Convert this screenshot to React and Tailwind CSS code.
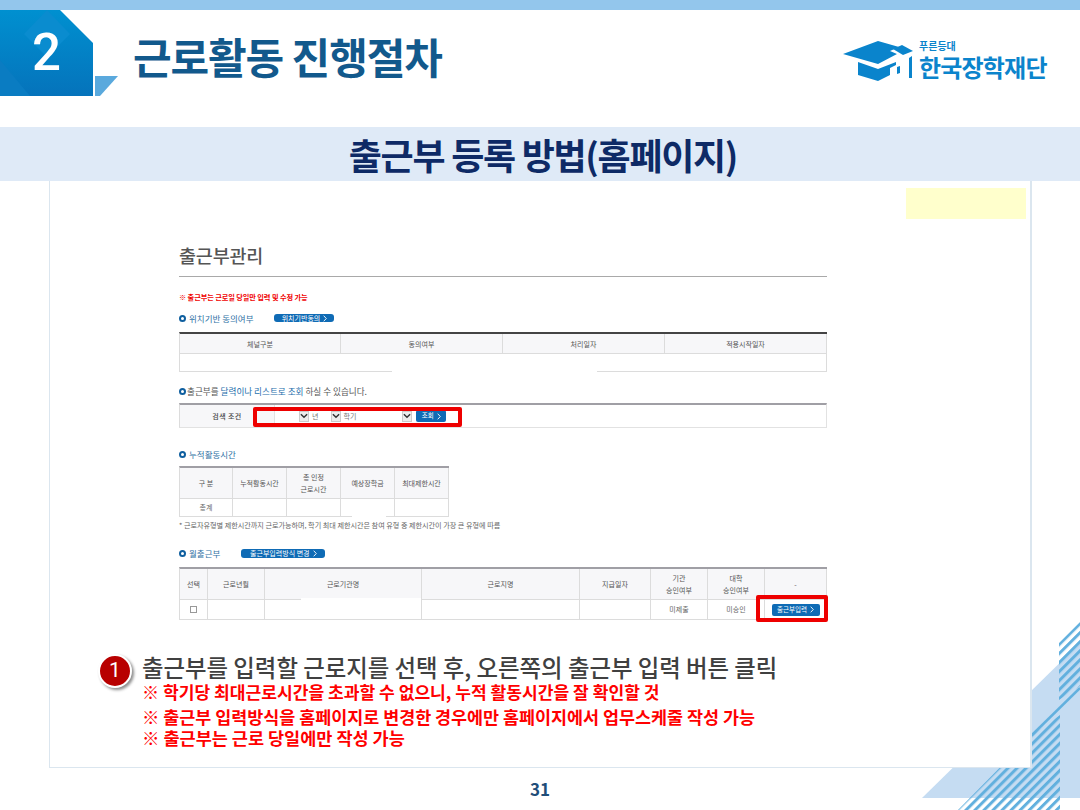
import React from "react";

const Chev = () => (
  <svg width="9" height="6" viewBox="0 0 9 6"><path d="M1 1l3.5 3.5L8 1" fill="none" stroke="#333" strokeWidth="1.6" /></svg>
);
const Arrow = () => (
  <svg width="4" height="7" viewBox="0 0 4 7" className="ml-[3px]"><path d="M.7.7L3.3 3.5.7 6.3" fill="none" stroke="#fff" strokeWidth="0.9" /></svg>
);
const Bullet = () => <span className="inline-block w-[7px] h-[7px] rounded-full border-2 border-[#0f5f9f] mr-[3px] shrink-0" />;

const Select = ({ w }) => (
  <span className={`${w} h-[12px] flex items-center justify-end bg-white`}>
    <span className="w-[10px] h-[11px] bg-[#ededed] border border-[#ccc] flex items-center justify-center"><Chev /></span>
  </span>
);

const Th = ({ children, className = "" }) => (
  <div className={`flex items-center justify-center text-center bg-[#f7f7f9] border-r border-b border-[#dcdcdc] text-[7px] leading-[12px] text-[#555] ${className}`}>{children}</div>
);
const Td = ({ children, className = "" }) => (
  <div className={`flex items-center justify-center text-center border-r border-b border-[#dcdcdc] text-[7px] text-[#666] ${className}`}>{children}</div>
);

function Decor() {
  return (
    <svg className="absolute inset-0" width="1080" height="810" viewBox="0 0 1080 810">
      <defs>
        <pattern id="hatch" width="6.4" height="6.4" patternUnits="userSpaceOnUse" patternTransform="rotate(-45)">
          <rect width="6.4" height="3" fill="#62b0de" />
        </pattern>
        <clipPath id="up"><polygon points="1059,643 1080,622 1080,686 1059,700" /></clipPath>
        <clipPath id="low"><polygon points="1060,715 1060,810 958,810 1032,735" /></clipPath>
      </defs>
      <polygon points="1080,643 922,798 1080,798" fill="#c5dcf2" />
      <rect x="0" y="0" width="1080" height="810" fill="url(#hatch)" clipPath="url(#up)" />
      <rect x="0" y="0" width="1080" height="810" fill="url(#hatch)" clipPath="url(#low)" />
      <line x1="1032" y1="735" x2="1080" y2="688" stroke="#62b0de" strokeWidth="2.5" />
    </svg>
  );
}

function Tab() {
  return (
    <div className="relative w-[120px] h-[86px] shrink-0">
      <svg width="120" height="86" viewBox="0 0 120 86" className="block">
        <defs>
          <linearGradient id="tabg" x1="0" y1="0" x2="0" y2="1">
            <stop offset="0" stopColor="#0090d0" />
            <stop offset="1" stopColor="#0573bb" />
          </linearGradient>
        </defs>
        <polygon points="0,0 60,0 93,33 93,86 0,86" fill="url(#tabg)" />
        <polygon points="47,0 70,24 47,47 24,24" fill="#0a8ccf" />
        <polygon points="0,50 30,86 0,86" fill="#0a7cc2" />
        <polygon points="95,66 118,66 100,86 95,86" fill="#5aa9dd" />
      </svg>
      <span className="absolute left-[32px] top-[15px] text-[51px] leading-[56px] font-medium text-white font-['Roboto',sans-serif]">2</span>
    </div>
  );
}

function Logo() {
  return (
    <div className="flex items-start w-[204px] h-[40px] shrink-0">
      <svg width="72" height="40" viewBox="0 0 72 40" className="shrink-0">
        <polygon points="0,13 35,0 56,6 47,10 54,13 35,23" fill="#0a84cc" />
        <polygon points="50,8 59,4 70,10 60,14" fill="#0a84cc" />
        <polygon points="15,21 35,28 53,21 53,24 47,27 47,34 35,40 15,34" fill="#0a84cc" />
        <polygon points="54,26 57,25 57,32 54,33" fill="#0a84cc" />
        <polygon points="66,17 69,15 69,37 66,37" fill="#0a84cc" />
      </svg>
      <div className="ml-[4px] flex flex-col text-[#0b84cc] font-bold">
        <span className="text-[10px] leading-[10px]">푸른등대</span>
        <span className="text-[24px] leading-[26px] tracking-[-0.8px] mt-[3px] whitespace-nowrap">한국장학재단</span>
      </div>
    </div>
  );
}

export default function App() {
  return (
    <div className="relative w-[1080px] h-[810px] overflow-hidden bg-white font-['Noto_Sans_CJK_KR','Noto_Sans',sans-serif]">
      <Decor />
      <div className="relative flex flex-col h-full">
        <div className="h-[10px] bg-[#93c6ec]" />
        <div className="flex items-center h-[86px]">
          <Tab />
          <h1 className="ml-[13px] text-[42px] leading-[50px] font-bold text-[#12598c] tracking-[-1.1px] mt-[5px] whitespace-nowrap">근로활동 진행절차</h1>
          <div className="flex-1" />
          <div className="mt-[16px] mr-[33px]"><Logo /></div>
        </div>
        <div className="h-[31px]" />
        <div className="h-[54px] bg-[#dfeaf7] flex items-center justify-center pl-[6px]">
          <h2 className="text-[36px] leading-[50px] font-bold text-[#0e2a66] tracking-[-1.3px]">출근부 등록 방법(홈페이지)</h2>
        </div>

        <div className="relative ml-[49px] w-[983px] h-[587px] bg-white border-l border-r-2 border-b border-[#dbe6ef]">
          <div className="absolute left-[856px] top-[7px] w-[120px] h-[31px] bg-[#ffffcc]" />
          <div className="ml-[129px] w-[648px] pt-[63px] relative">
            <div className="h-[22px] flex items-center text-[18.5px] leading-[22px] font-medium text-[#555] tracking-[-0.2px]">출근부관리</div>
            <div className="mt-[10px] h-px bg-[#a9a9a9]" />
            <div className="mt-[16px] h-[9px] flex items-center text-[7.2px] leading-[9px] font-bold text-[#f00000] tracking-[-0.1px]">※ 출근부는 근로일 당일만 입력 및 수정 가능</div>

            <div className="mt-[11px] h-[10px] flex items-center text-[8.5px] leading-[10px] text-[#2f72a5]">
              <Bullet />위치기반 동의여부
              <span className="ml-[21px] w-[60px] h-[8px] rounded-[3px] bg-[#0f6bb5] text-white text-[7px] leading-[8px] flex items-center justify-center">위치기반동의<Arrow /></span>
            </div>
            <div className="relative mt-[9px] grid grid-cols-[161px_162px_162px_162px] grid-rows-[20px_18px] border-t-2 border-[#444] border-l border-l-[#dcdcdc]">
              <Th>체널구분</Th><Th>동의여부</Th><Th>처리일자</Th><Th>적용시작일자</Th>
              <Td className="col-span-4" />
              <div className="absolute left-[212px] top-[36px] w-[205px] h-[3px] bg-white" />
            </div>

            <div className="mt-[14px] h-[10px] flex items-center text-[8.6px] leading-[10px] text-[#555]">
              <Bullet /><span className="ml-[-2px]">출근부를 <span className="text-[#1a6cab]">달력이나 리스트로 조회</span> 하실 수 있습니다.</span>
            </div>
            <div className="relative mt-[7px] h-[25px] flex border-t-2 border-[#a09fa5] border-b border-b-[#e2e2e2] border-r border-r-[#e2e2e2] border-l border-l-[#dcdcdc]">
              <div className="w-[95px] h-full bg-[#f7f7f9] border-r border-[#e2e2e2] flex items-center justify-center text-[7px] font-medium text-[#444] tracking-[0.4px]">검색 조건</div>
              <div className="flex items-center ml-[6px] text-[7px] text-[#777]">
                <Select w="w-[28px]" />
                <span className="ml-[3px] mr-[4px]">년</span>
                <Select w="w-[19px]" />
                <span className="ml-[2px] mr-[1px]">학기</span>
                <Select w="w-[55px]" />
                <span className="ml-[4px] w-[30px] h-[12px] rounded-[2px] bg-[#0f6bb5] text-white text-[6.5px] flex items-center justify-center">조회<Arrow /></span>
              </div>
              <div className="absolute left-[73px] top-[2px] w-[209px] h-[20px] border-4 border-[#ee0000] rounded-[2px]" />
            </div>

            <div className="mt-[21px] h-[10px] flex items-center text-[8.5px] leading-[10px] text-[#2f72a5]"><Bullet />누적활동시간</div>
            <div className="relative mt-[7px] w-[270px] grid grid-cols-[53px_54px_54px_54px_54px] grid-rows-[31px_18px] border-t-2 border-[#a09fa5] border-l border-l-[#dcdcdc]">
              <Th>구 분</Th><Th>누적활동시간</Th><Th>총 인정<br />근로시간</Th><Th>예상장학금</Th><Th>최대제한시간</Th>
              <Td>총계</Td><Td /><Td /><Td /><Td />
              <div className="absolute left-[172px] top-[47px] w-[34px] h-[3px] bg-white" />
            </div>
            <div className="mt-[4px] h-[9px] flex items-center text-[7.1px] leading-[9px] text-[#666] whitespace-nowrap">* 근로자유형별 제한시간까지 근로가능하며, 학기 최대 제한시간은 참여 유형 중 제한시간이 가장 큰 유형에 따름</div>

            <div className="mt-[18px] h-[10px] flex items-center text-[8.5px] leading-[10px] text-[#2f72a5]">
              <Bullet />월출근부
              <span className="ml-[21px] w-[84px] h-[9px] rounded-[3px] bg-[#0f6bb5] text-white text-[7px] leading-[9px] flex items-center justify-center">출근부입력방식 변경<Arrow /></span>
            </div>
            <div className="relative mt-[9px] grid grid-cols-[28px_57px_157px_158px_71px_57px_57px_62px] grid-rows-[31px_20px] border-t-2 border-[#a09fa5] border-l border-l-[#dcdcdc]">
              <Th>선택</Th><Th>근로년월</Th><Th>근로기관명</Th><Th>근로지명</Th><Th>지급일자</Th><Th>기관<br />승인여부</Th><Th>대학<br />승인여부</Th><Th>-</Th>
              <Td><span className="w-[7px] h-[7px] border border-[#999] bg-white" /></Td><Td /><Td /><Td /><Td /><Td>미제출</Td><Td>미승인</Td>
              <Td><span className="w-[48px] h-[12px] rounded-[2px] bg-[#0f6bb5] text-white text-[6.5px] flex items-center justify-center">출근부입력<Arrow /></span></Td>
              <div className="absolute left-[121px] top-[29px] w-[120px] h-[3px] bg-white" />
              <div className="absolute left-[576px] top-[26px] w-[72px] h-[27px] border-4 border-[#ee0000] rounded-[2px]" />
            </div>
          </div>

          <div className="mt-[34px] ml-[48px] flex items-start">
            <span className="w-[34px] h-[34px] shrink-0 rounded-full bg-[#b80000] border-2 border-white shadow-[2px_2px_3px_rgba(0,0,0,0.45)] flex items-center justify-center text-white text-[21px] font-['Roboto',sans-serif]">1</span>
            <div className="ml-[10px] flex flex-col">
              <div className="h-[26px] flex items-center text-[23.4px] leading-[26px] font-medium text-[#404040] whitespace-nowrap">출근부를 입력할 근로지를 선택 후, 오른쪽의 출근부 입력 버튼 클릭</div>
              <div className="mt-[3px] h-[18px] flex items-center text-[17.1px] leading-[18px] font-bold text-[#f00] whitespace-nowrap">※ 학기당 최대근로시간을 초과할 수 없으니, 누적 활동시간을 잘 확인할 것</div>
              <div className="mt-[7px] h-[18px] flex items-center text-[17.4px] leading-[18px] font-bold text-[#f00] whitespace-nowrap">※ 출근부 입력방식을 홈페이지로 변경한 경우에만 홈페이지에서 업무스케줄 작성 가능</div>
              <div className="mt-[3px] h-[18px] flex items-center text-[17.5px] leading-[18px] font-bold text-[#f00] whitespace-nowrap">※ 출근부는 근로 당일에만 작성 가능</div>
            </div>
          </div>
        </div>

        <div className="h-[42px] flex items-center justify-center text-[17px] font-bold text-[#1f4e79]">31</div>
      </div>
    </div>
  );
}
